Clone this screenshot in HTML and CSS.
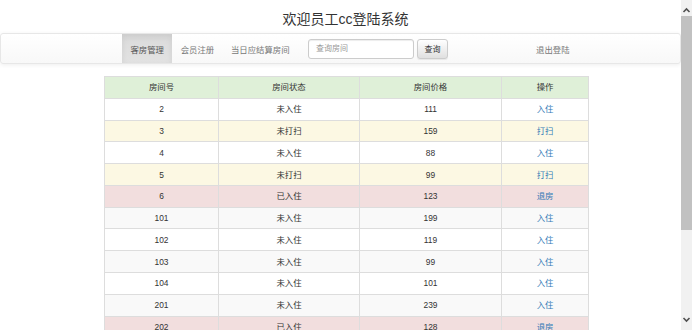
FILE: index.html
```html
<!DOCTYPE html>
<html lang="zh-CN">
<head>
<meta charset="utf-8">
<title>客房管理</title>
<link rel="stylesheet" href="styles.css">
</head>
<body>
<div class="page">
  <h1 class="page-title">欢迎员工cc登陆系统</h1>
  <nav class="navbar">
    <ul class="nav-list">
      <li class="nav-item active">客房管理</li>
      <li class="nav-item">会员注册</li>
      <li class="nav-item">当日应结算房间</li>
    </ul>
    <form class="search-form">
      <input class="search-input" type="text" placeholder="查询房间">
      <button class="search-btn" type="button">查询</button>
    </form>
    <div class="nav-item nav-right">退出登陆</div>
  </nav>
  <div class="table-wrap">
  <table class="room-table">
    <colgroup>
      <col class="c1"><col class="c2"><col class="c3"><col class="c4">
    </colgroup>
    <tr class="head"><th>房间号</th><th>房间状态</th><th>房间价格</th><th>操作</th></tr>
    <tr class="plain"><td>2</td><td>未入住</td><td>111</td><td><a href="#">入住</a></td></tr>
    <tr class="warn"><td>3</td><td>未打扫</td><td>159</td><td><a href="#">打扫</a></td></tr>
    <tr class="plain"><td>4</td><td>未入住</td><td>88</td><td><a href="#">入住</a></td></tr>
    <tr class="warn"><td>5</td><td>未打扫</td><td>99</td><td><a href="#">打扫</a></td></tr>
    <tr class="danger"><td>6</td><td>已入住</td><td>123</td><td><a href="#">退房</a></td></tr>
    <tr class="stripe"><td>101</td><td>未入住</td><td>199</td><td><a href="#">入住</a></td></tr>
    <tr class="plain"><td>102</td><td>未入住</td><td>119</td><td><a href="#">入住</a></td></tr>
    <tr class="stripe"><td>103</td><td>未入住</td><td>99</td><td><a href="#">入住</a></td></tr>
    <tr class="plain"><td>104</td><td>未入住</td><td>101</td><td><a href="#">入住</a></td></tr>
    <tr class="stripe"><td>201</td><td>未入住</td><td>239</td><td><a href="#">入住</a></td></tr>
    <tr class="danger"><td>202</td><td>已入住</td><td>128</td><td><a href="#">退房</a></td></tr>
  </table>
  </div>
</div>
<div class="scrollbar" aria-hidden="true">
  <div class="sb-btn">
    <svg width="11" height="16" viewBox="0 0 11 16"><path d="M2.5 12 L5.5 9 L8.5 12" fill="none" stroke="#505050" stroke-width="1.6"/></svg>
  </div>
  <div class="sb-thumb"></div>
  <div class="sb-track"></div>
  <div class="sb-btn">
    <svg width="11" height="16" viewBox="0 0 11 16"><path d="M2.5 4 L5.5 7 L8.5 4" fill="none" stroke="#505050" stroke-width="1.6"/></svg>
  </div>
</div>
</body>
</html>
```

FILE: styles.css
```css
html {
  background: #fff;
}
body {
  margin: 0;
  height: 330px;
  overflow: hidden;
  display: flex;
  font-family: "Liberation Sans", "Noto Sans CJK SC", sans-serif;
  font-size: 8.4px;
  color: #333;
}
.page {
  flex: 1;
  min-width: 0;
  overflow: hidden;
}

.scrollbar {
  width: 11px;
  flex: none;
  display: flex;
  flex-direction: column;
  background: #f1f1f1;
}
.sb-btn {
  height: 16px;
  flex: none;
}
.sb-btn svg {
  display: block;
}
.sb-thumb {
  height: 214px;
  flex: none;
  background: #c1c1c1;
}
.sb-track {
  flex: 1;
}

.page-title {
  margin: 0;
  height: 33px;
  box-sizing: border-box;
  padding: 9px 0 0 10px;
  line-height: 20px;
  font-size: 14px;
  font-weight: normal;
  text-align: center;
  color: #333;
}

.navbar {
  display: flex;
  align-items: stretch;
  height: 31px;
  box-sizing: border-box;
  padding: 0 102px 0 121px;
  border: 1px solid #e7e7e7;
  border-radius: 3px;
  background: linear-gradient(to bottom, #fff 0, #f8f8f8 100%);
  box-shadow: inset 0 1px 0 rgba(255,255,255,.15), 0 1px 4px rgba(0,0,0,.07);
}
.nav-list {
  display: flex;
  margin: 0;
  padding: 0;
  list-style: none;
}
.nav-item {
  display: flex;
  align-items: center;
  padding: 0 8.4px;
  color: #777;
  font-size: 8.4px;
}
.nav-item.active {
  color: #555;
  background: linear-gradient(to bottom, #dbdbdb 0, #e2e2e2 100%);
  box-shadow: inset 0 3px 6px rgba(0,0,0,.075);
}
.search-form {
  display: flex;
  align-items: center;
  gap: 3px;
  margin: 0 0 0 10px;
}
.search-input {
  width: 106px;
  height: 20px;
  box-sizing: border-box;
  margin: 0;
  padding: 0 7px;
  border: 1px solid #ccc;
  border-radius: 3px;
  box-shadow: inset 0 1px 1px rgba(0,0,0,.075);
  font-family: "Liberation Sans", "Noto Sans CJK SC", sans-serif;
  font-size: 8px;
  color: #555;
  background: #fff;
}
.search-input::placeholder {
  color: #999;
}
.search-btn {
  width: 31px;
  height: 20px;
  box-sizing: border-box;
  margin: 0;
  padding: 0;
  border: 1px solid #ccc;
  border-radius: 3px;
  background: linear-gradient(to bottom, #fff 0, #e0e0e0 100%);
  box-shadow: inset 0 1px 0 rgba(255,255,255,.15), 0 1px 1px rgba(0,0,0,.075);
  font-family: "Liberation Sans", "Noto Sans CJK SC", sans-serif;
  font-size: 8px;
  color: #333;
}
.nav-right {
  margin-left: auto;
}

.table-wrap {
  padding: 12px 0 0 104px;
}
.room-table {
  width: 484px;
  table-layout: fixed;
  border-collapse: collapse;
  border-top: 1px solid #ddd;
}
.c1 { width: 114px; }
.c2 { width: 141px; }
.c3 { width: 142px; }
.c4 { width: 87px; }
.room-table th,
.room-table td {
  padding: 3.4px 4px;
  line-height: 14px;
  border: 1px solid #ddd;
  text-align: center;
  font-weight: normal;
  font-size: 8.4px;
  color: #333;
}
.room-table a {
  color: #337ab7;
  text-decoration: none;
}
.head { background: #dff0d8; }
.plain { background: #fff; }
.stripe { background: #f9f9f9; }
.warn { background: #fcf8e3; }
.danger { background: #f2dede; }
```
